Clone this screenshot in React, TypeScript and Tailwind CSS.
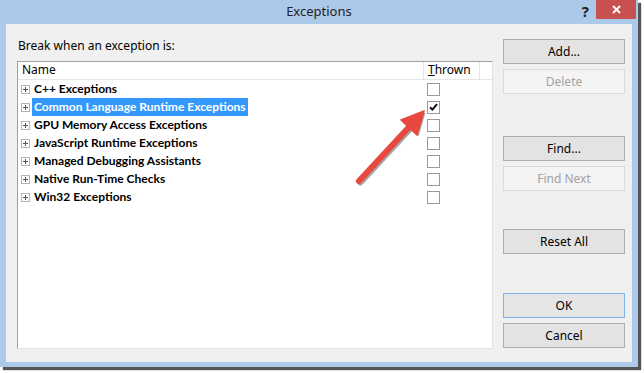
import React from "react";

const rows = [
  "C++ Exceptions",
  "Common Language Runtime Exceptions",
  "GPU Memory Access Exceptions",
  "JavaScript Runtime Exceptions",
  "Managed Debugging Assistants",
  "Native Run-Time Checks",
  "Win32 Exceptions",
];

/* ================= SMALL PIECES ================= */
function PlusBox() {
  return (
    <span className="w-[9px] h-[9px] border border-[#b5b5b5] bg-white flex items-center justify-center shrink-0">
      <svg width="5" height="5" viewBox="0 0 5 5">
        <path d="M0 2.5H5M2.5 0V5" stroke="#555" strokeWidth="1" />
      </svg>
    </span>
  );
}

function Check({ checked }: { checked?: boolean }) {
  return (
    <span className="w-[13px] h-[13px] border border-[#9a9a9a] bg-white flex items-center justify-center">
      {checked && (
        <svg width="9" height="8" viewBox="0 0 9 8">
          <path d="M1 4.2L3.4 6.6L8 1.2" stroke="#111" strokeWidth="2" fill="none" />
        </svg>
      )}
    </span>
  );
}

function Btn({ label, disabled, isDefault, className = "" }: any) {
  return (
    <div
      className={`h-[25px] w-[122px] flex items-center justify-center text-[12px] border ${
        disabled
          ? "border-[#dadada] bg-[#f4f4f4] text-[#a3a3a3]"
          : isDefault
          ? "border-[#7eb4ea] bg-[#e5e5e5] text-black"
          : "border-[#adadad] bg-[#e3e3e3] text-black"
      } ${className}`}
    >
      {label}
    </div>
  );
}

/* ================= ARROW ================= */
function Arrow() {
  return (
    <svg className="absolute left-0 top-0 pointer-events-none" width="644" height="373">
      <g opacity="0.35" transform="translate(1.5,1.5)">
        <path d="M359 181L410 126" stroke="#000" strokeWidth="6" strokeLinecap="round" />
        <path d="M424 111L401 120L417 135Z" fill="#000" />
      </g>
      <path d="M359 181L410 126" stroke="#e8483e" strokeWidth="6" strokeLinecap="round" />
      <path d="M424 111L401 120L417 135Z" fill="#e8483e" stroke="#e8483e" strokeWidth="1.5" strokeLinejoin="round" />
    </svg>
  );
}

export default function App() {
  return (
    <div className="w-[644px] h-[373px] bg-white relative overflow-hidden font-['Segoe_UI','Noto_Sans',sans-serif]">
      <div className="w-[638px] h-[367px] bg-[#adc9ea] flex flex-col shadow-[3px_3px_1px_#555]">
        {/* Title bar */}
        <div className="h-[24px] flex items-start relative">
          <div className="flex-1 text-center text-[13px] leading-[22px] text-[#222] pl-[56px]">Exceptions</div>
          <div className="text-[15px] font-bold leading-[18px] text-[#222] mt-[2px] mr-[7px]">?</div>
          <div className="w-[40px] h-[19px] bg-[#c75050] mr-[2px] flex items-center justify-center">
            <svg width="9" height="9" viewBox="0 0 9 9">
              <path d="M1 1L8 8M8 1L1 8" stroke="#fff" strokeWidth="2" />
            </svg>
          </div>
        </div>

        {/* Client */}
        <div className="flex-1 mx-[6px] mb-[5px] bg-[#f0f0f0] flex">
          <div className="pl-[11px] pt-[14px] flex flex-col">
            <div className="pl-[1px] text-[12px] leading-[16px] text-black h-[16px]">Break when an exception is:</div>
            <div className="mt-[7px] w-[476px] h-[288px] bg-white border-t border-l border-t-[#a0a0a0] border-l-[#a0a0a0] border-r border-b border-r-[#e3e3e3] border-b-[#e3e3e3]">
              <div className="h-[18px] flex border-b border-[#e5e5e5] text-[12px] leading-[16px]">
                <div className="w-[406px] pl-[4px] border-r border-[#e5e5e5]">Name</div>
                <div className="w-[56px] pl-[4px] border-r border-[#e5e5e5]">
                  <span className="underline underline-offset-1">T</span>hrown
                </div>
              </div>
              {rows.map((r, i) => (
                <div key={r} className="h-[18px] flex items-center">
                  <div className="w-[406px] flex items-center h-full">
                    <span className="ml-[3px]">
                      <PlusBox />
                    </span>
                    <span
                      className={`ml-[2px] px-[2px] h-full flex items-center text-[12px] font-bold font-['Lato',sans-serif] ${
                        i === 1 ? "bg-[#3399ff] text-white" : "text-black"
                      }`}
                    >
                      {r}
                    </span>
                  </div>
                  <div className="ml-[3px]">
                    <Check checked={i === 1} />
                  </div>
                </div>
              ))}
            </div>
          </div>

          <div className="ml-[10px] pt-[15px] flex flex-col">
            <Btn label="Add..." />
            <Btn label="Delete" disabled className="mt-[5px]" />
            <Btn label="Find..." className="mt-[42px]" />
            <Btn label="Find Next" disabled className="mt-[5px]" />
            <Btn label="Reset All" className="mt-[38px]" />
            <Btn label="OK" isDefault className="mt-[39px]" />
            <Btn label="Cancel" className="mt-[5px]" />
          </div>
        </div>
      </div>
      <Arrow />
    </div>
  );
}
